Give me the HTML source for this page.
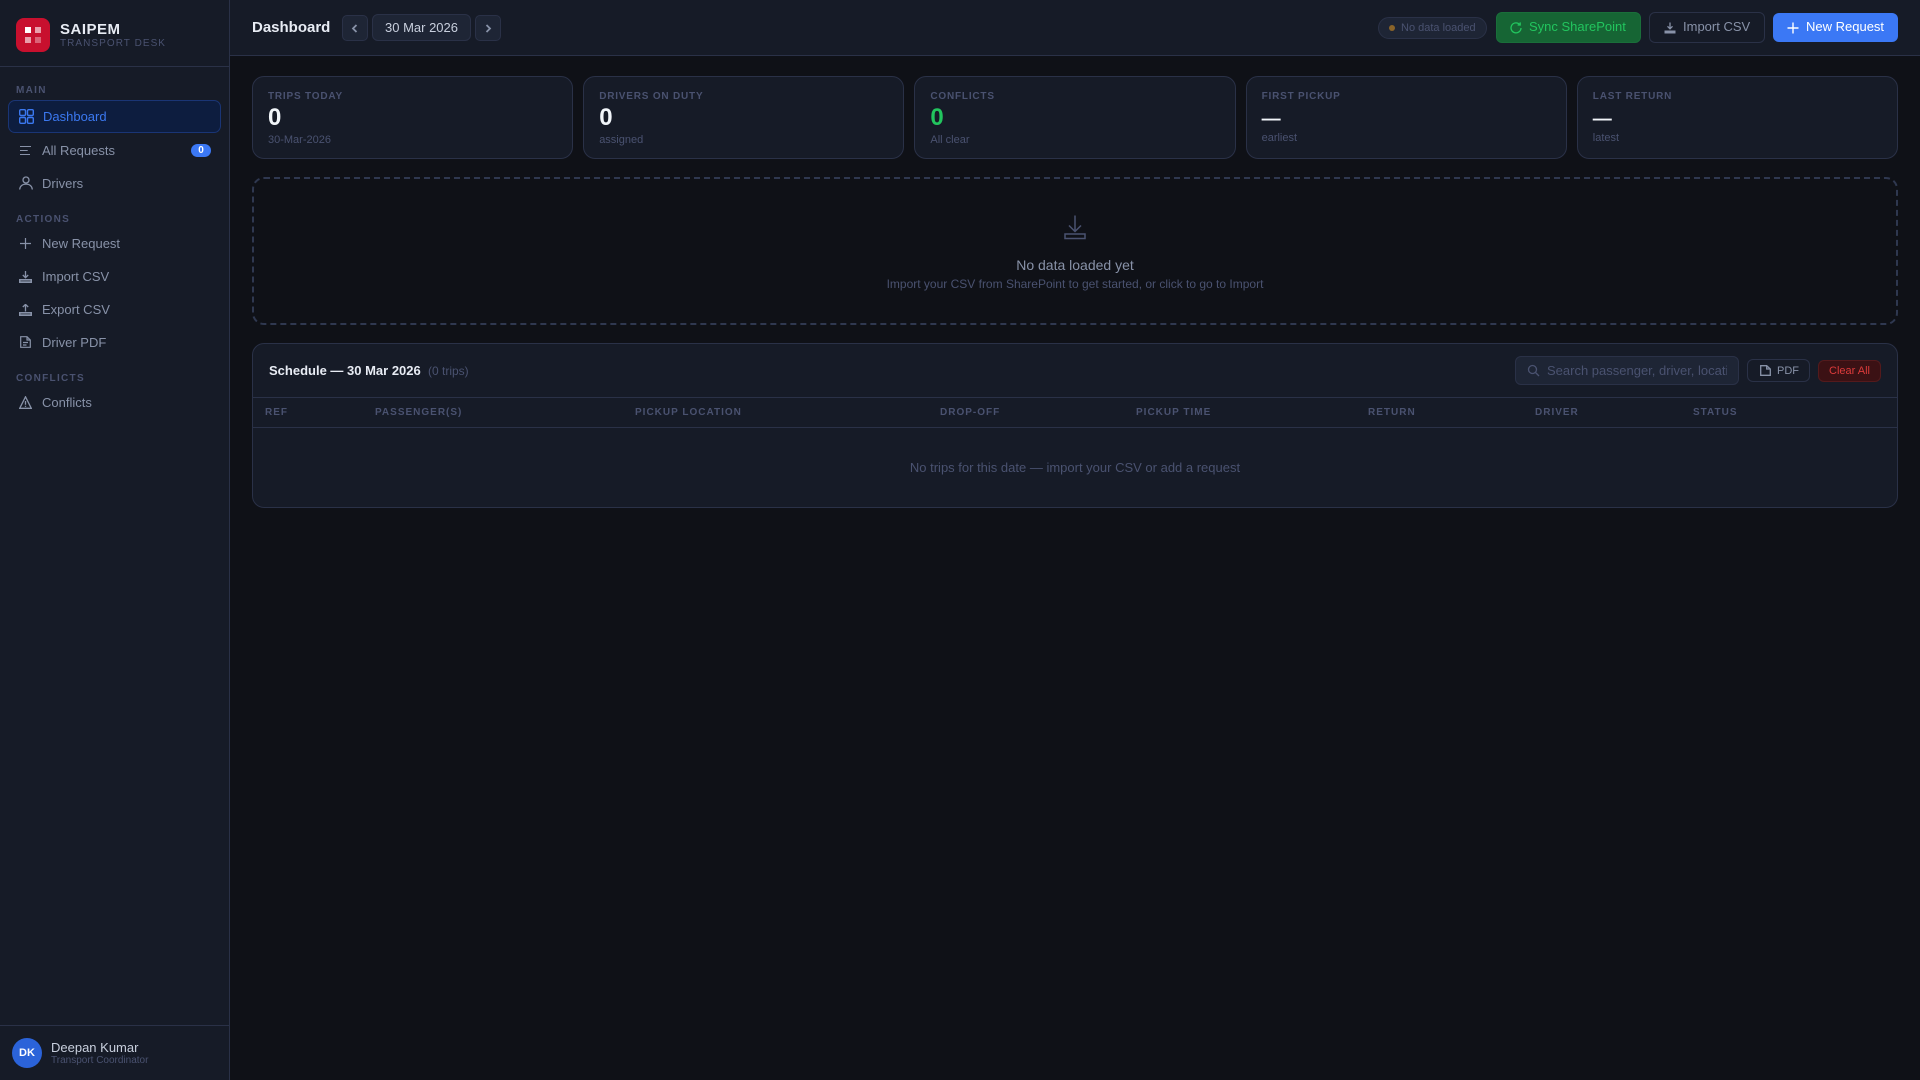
<!DOCTYPE html>
<html lang="en">
<head>
<meta charset="utf-8">
<title>SAIPEM Transport Desk</title>
<style>
*{box-sizing:border-box;margin:0;padding:0}
html,body{width:1920px;height:1080px;overflow:hidden;background:#0f1117;font-family:"Liberation Sans",sans-serif}
.a{position:absolute}
.t{position:absolute;white-space:nowrap;line-height:16px}
svg{position:absolute;display:block;fill:none}
#side{left:0;top:0;width:230px;height:1080px;background:#161b27;border-right:1px solid #2a3147}
#top{left:230px;top:0;width:1690px;height:56px;background:#161b27;border-bottom:1px solid #2a3147}
.sec{font-size:10px;font-weight:700;letter-spacing:1.3px;color:#4a5270}
.nav{font-size:13px;color:#8892a8}
.card{position:absolute;top:76px;width:321.2px;height:83px;background:#161b27;border:1px solid #2a3147;border-radius:12px}
.lbl{left:15px;top:12px;font-size:10px;font-weight:700;letter-spacing:.8px;color:#4a5270}
.val{left:15px;top:26px;font-size:24px;font-weight:700;color:#f1f5f9;line-height:30px}
.sub{left:15px;top:55px;font-size:11px;color:#4a5270}
.th{top:405px;font-size:10px;font-weight:700;letter-spacing:1px;color:#4a5270}
</style>
</head>
<body>
<div id="side" class="a"></div>
<div id="top" class="a"></div>

<!-- logo -->
<div class="a" style="left:16px;top:18px;width:34px;height:34px;border-radius:8px;background:#c8102e"></div>
<div class="a" style="left:25px;top:27px;width:6px;height:6px;background:#fff"></div>
<div class="a" style="left:35px;top:27px;width:6px;height:6px;background:rgba(255,255,255,.6)"></div>
<div class="a" style="left:25px;top:37px;width:6px;height:6px;background:rgba(255,255,255,.6)"></div>
<div class="a" style="left:35px;top:37px;width:6px;height:6px;background:rgba(255,255,255,.35)"></div>
<div class="t" style="left:60px;top:22px;font-size:15px;font-weight:700;letter-spacing:.5px;color:#e8ecf4">SAIPEM</div>
<div class="t" style="left:60px;top:36px;font-size:10px;letter-spacing:1.05px;color:#4a5270">TRANSPORT DESK</div>
<div class="a" style="left:0;top:66px;width:229px;height:1px;background:#2a3147"></div>

<!-- nav -->
<div class="t sec" style="left:16px;top:83px">MAIN</div>
<div class="a" style="left:8px;top:100px;width:213px;height:33px;border-radius:7px;background:#0d1d3f;border:1px solid #1a3575"></div>
<svg style="left:19px;top:109px" width="15" height="15" viewBox="0 0 15 15" stroke="#3b78f0" stroke-width="1.4"><rect x=".7" y=".7" width="5.8" height="5.8" rx="1.2"/><rect x="8.5" y=".7" width="5.8" height="5.8" rx="1.2"/><rect x=".7" y="8.5" width="5.8" height="5.8" rx="1.2"/><rect x="8.5" y="8.5" width="5.8" height="5.8" rx="1.2"/></svg>
<div class="t" style="left:43px;top:109px;font-size:13px;color:#3b78f0">Dashboard</div>

<svg style="left:20px;top:146px" width="11" height="9" viewBox="0 0 11 9" stroke="#8892a8" stroke-width="1"><path d="M0 .5h11M0 4.500h7.700M0 8.500h10"/></svg>
<div class="t nav" style="left:42px;top:143px">All Requests</div>
<div class="a" style="left:191px;top:144px;width:20px;height:13px;border-radius:7px;background:#3b78f5;color:#fff;font-size:10px;font-weight:700;text-align:center;line-height:13px">0</div>

<svg style="left:19px;top:176px" width="14" height="14" viewBox="0 0 14 14" stroke="#8892a8" stroke-width="1.3"><circle cx="7" cy="4" r="3"/><path d="M.7 13.500c.3-3.400 2.800-5.400 6.300-5.400s6 2 6.300 5.400"/></svg>
<div class="t nav" style="left:42px;top:176px">Drivers</div>

<div class="t sec" style="left:16px;top:212px">ACTIONS</div>
<svg style="left:20px;top:238px" width="11" height="11" viewBox="0 0 11 11" stroke="#8892a8" stroke-width="1.200"><path d="M5.500 0v11M0 5.500h11"/></svg>
<div class="t nav" style="left:42px;top:236px">New Request</div>

<svg style="left:19px;top:271px" width="13" height="12" viewBox="0 0 13 12" stroke="#8892a8" stroke-width="1.300"><path d="M6.500 0v6.500M3.800 4 6.500 6.700 9.200 4"/><path d="M0 8h13v4H0z" fill="#8892a8" stroke="none"/><path d="M1.500 9.300h10v1.200h-10z" fill="#161b27" stroke="none" opacity=".55"/></svg>
<div class="t nav" style="left:42px;top:269px">Import CSV</div>

<svg style="left:19px;top:304px" width="13" height="12" viewBox="0 0 13 12" stroke="#8892a8" stroke-width="1.300"><path d="M6.500 7.500V.5M3.800 3 6.500.400 9.200 3"/><path d="M0 8h13v4H0z" fill="#8892a8" stroke="none"/><path d="M1.500 9.300h10v1.200h-10z" fill="#161b27" stroke="none" opacity=".55"/></svg>
<div class="t nav" style="left:42px;top:302px">Export CSV</div>

<svg style="left:20px;top:336px" width="11" height="12" viewBox="0 0 11 12" stroke="#8892a8" stroke-width="1.200"><path d="M.7.700h6.300L10.300 4v7.300H.7zM7 .700V4h3.300M3 6.500h5M3 9h3.500"/></svg>
<div class="t nav" style="left:42px;top:335px">Driver PDF</div>

<div class="t sec" style="left:16px;top:371px">CONFLICTS</div>
<svg style="left:19px;top:396px" width="13" height="13" viewBox="0 0 13 13" stroke="#8892a8" stroke-width="1.300"><path d="M6.500.8 12.300 12.300H.7zM6.500 5v3.800M6.500 9.700v1.200"/></svg>
<div class="t nav" style="left:42px;top:395px">Conflicts</div>

<!-- footer -->
<div class="a" style="left:0;top:1025px;width:229px;height:1px;background:#2a3147"></div>
<div class="a" style="left:12px;top:1038px;width:30px;height:30px;border-radius:50%;background:#2b63d9;color:#fff;font-size:11px;font-weight:700;text-align:center;line-height:30px">DK</div>
<div class="t" style="left:51px;top:1040px;font-size:13px;color:#c8cfdd">Deepan Kumar</div>
<div class="t" style="left:51px;top:1053px;font-size:10px;color:#4a5270">Transport Coordinator</div>

<!-- top bar -->
<div class="t" style="left:252px;top:20px;font-size:15px;font-weight:700;color:#e8ecf4">Dashboard</div>
<div class="a" style="left:342px;top:15px;width:26px;height:26px;border-radius:5px;background:#1e2535;border:1px solid #2a3147"></div>
<svg style="left:351px;top:24px" width="8" height="9" viewBox="0 0 8 9" stroke="#8892a8" stroke-width="1.800"><path d="M5.500 1 2 4.500 5.500 8"/></svg>
<div class="a" style="left:372px;top:14px;width:99px;height:27px;border-radius:6px;background:#1e2535;border:1px solid #2a3147;color:#c8cfdd;font-size:13px;text-align:center;line-height:25px">30 Mar 2026</div>
<div class="a" style="left:475px;top:15px;width:26px;height:26px;border-radius:5px;background:#1e2535;border:1px solid #2a3147"></div>
<svg style="left:484px;top:24px" width="8" height="9" viewBox="0 0 8 9" stroke="#8892a8" stroke-width="1.800"><path d="M2.500 1 6 4.500 2.500 8"/></svg>

<div class="a" style="left:1378px;top:17px;width:109px;height:22px;border-radius:11px;background:#1e2535;border:1px solid #2a3147"></div>
<div class="a" style="left:1389px;top:25px;width:6px;height:6px;border-radius:50%;background:#8a6429"></div>
<div class="t" style="left:1401px;top:20px;font-size:11px;color:#4a5270">No data loaded</div>

<div class="a" style="left:1496px;top:12px;width:145px;height:31px;border-radius:6px;background:#166534;border:1px solid #1a6e3a"></div>
<svg style="left:1510px;top:22px" width="12" height="12" viewBox="0 0 12 12" stroke="#22c55e" stroke-width="1.300"><path d="M9.800 2.600A5 5 0 1 0 11 6M10.200 .4v2.600H7.600"/></svg>
<div class="t" style="left:1529px;top:19px;font-size:13px;color:#22c55e">Sync SharePoint</div>

<div class="a" style="left:1649px;top:12px;width:116px;height:31px;border-radius:6px;border:1px solid #2a3147"></div>
<svg style="left:1664px;top:22px" width="12" height="12" viewBox="0 0 12 12" stroke="#8892a8" stroke-width="1.300"><path d="M6 .5v6M3.500 4.300 6 6.800l2.500-2.500"/><path d="M.5 8.500h11v3H.5z" fill="#8892a8" stroke="none"/></svg>
<div class="t" style="left:1683px;top:19px;font-size:13px;color:#8892a8">Import CSV</div>

<div class="a" style="left:1773px;top:13px;width:125px;height:29px;border-radius:6px;background:#3b78f5"></div>
<svg style="left:1787px;top:22px" width="12" height="12" viewBox="0 0 12 12" stroke="#fff" stroke-width="1.400"><path d="M6 .5v11M.5 6h11"/></svg>
<div class="t" style="left:1806px;top:19px;font-size:13px;color:#fff">New Request</div>

<!-- cards -->
<div class="card" style="left:252px"><div class="t lbl">TRIPS TODAY</div><div class="t val">0</div><div class="t sub">30-Mar-2026</div></div>
<div class="card" style="left:583.2px"><div class="t lbl">DRIVERS ON DUTY</div><div class="t val">0</div><div class="t sub">assigned</div></div>
<div class="card" style="left:914.4px"><div class="t lbl">CONFLICTS</div><div class="t val" style="color:#22c55e">0</div><div class="t sub">All clear</div></div>
<div class="card" style="left:1245.6px"><div class="t lbl">FIRST PICKUP</div><div class="t val" style="font-size:19px;top:28px">—</div><div class="t sub" style="top:53px">earliest</div></div>
<div class="card" style="left:1576.8px"><div class="t lbl">LAST RETURN</div><div class="t val" style="font-size:19px;top:28px">—</div><div class="t sub" style="top:53px">latest</div></div>

<!-- drop zone -->
<div class="a" style="left:252px;top:177px;width:1646px;height:148px;border-radius:12px;border:2px dashed #2f3850"></div>
<svg style="left:1064px;top:215px" width="22" height="25" viewBox="0 0 22 25" stroke="#4a5270" stroke-width="1.500"><path d="M11 .5v15.500M5 10.500l6 6 6-6"/><rect x="1" y="19" width="20" height="4.500"/></svg>
<div class="t" style="left:252px;width:1646px;top:257px;text-align:center;font-size:14px;color:#8892a8">No data loaded yet</div>
<div class="t" style="left:252px;width:1646px;top:276px;text-align:center;font-size:12px;color:#4a5270">Import your CSV from SharePoint to get started, or click to go to Import</div>

<!-- schedule -->
<div class="a" style="left:252px;top:343px;width:1646px;height:165px;border-radius:12px;background:#161b27;border:1px solid #2a3147"></div>
<div class="a" style="left:253px;top:397px;width:1644px;height:1px;background:#2a3147"></div>
<div class="a" style="left:253px;top:427px;width:1644px;height:1px;background:#2a3147"></div>
<div class="t" style="left:269px;top:363px;font-size:13px;font-weight:700;color:#e8ecf4">Schedule — 30 Mar 2026</div>
<div class="t" style="left:428px;top:363px;font-size:12px;color:#4a5270">(0 trips)</div>

<div class="a" style="left:1515px;top:356px;width:224px;height:29px;border-radius:6px;background:#1e2535;border:1px solid #2a3147"></div>
<svg style="left:1527px;top:364px" width="13" height="13" viewBox="0 0 13 13" stroke="#4a5270" stroke-width="1.300"><circle cx="5.500" cy="5.500" r="4"/><path d="m8.500 8.500 3.500 3.500"/></svg>
<div class="a" style="left:1547px;top:362px;width:180px;height:17px;overflow:hidden;white-space:nowrap;font-size:13px;line-height:17px;color:#4a5270">Search passenger, driver, location...</div>

<div class="a" style="left:1747px;top:359px;width:63px;height:23px;border-radius:6px;border:1px solid #2a3147"></div>
<svg style="left:1760px;top:365px" width="11" height="11" viewBox="0 0 11 11" stroke="#8892a8" stroke-width="1.300"><path d="M.7.700h6L10.300 4v6.300H.7zM6.700.700V4h3.600"/></svg>
<div class="t" style="left:1777px;top:363px;font-size:11px;color:#8892a8">PDF</div>
<div class="a" style="left:1818px;top:360px;width:63px;height:22px;border-radius:6px;background:#3b1114;border:1px solid #541a1c;color:#dc3b3b;font-size:11px;text-align:center;line-height:20px">Clear All</div>

<div class="t th" style="left:265px">REF</div>
<div class="t th" style="left:375px">PASSENGER(S)</div>
<div class="t th" style="left:635px">PICKUP LOCATION</div>
<div class="t th" style="left:940px">DROP-OFF</div>
<div class="t th" style="left:1136px">PICKUP TIME</div>
<div class="t th" style="left:1368px">RETURN</div>
<div class="t th" style="left:1535px">DRIVER</div>
<div class="t th" style="left:1693px">STATUS</div>
<div class="t" style="left:252px;width:1646px;top:460px;text-align:center;font-size:13px;color:#4a5270">No trips for this date — import your CSV or add a request</div>
</body>
</html>
